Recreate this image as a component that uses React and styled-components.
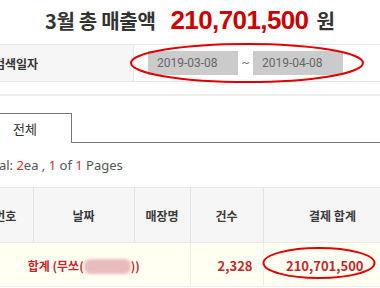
import React from "react";
import styled, { createGlobalStyle } from "styled-components";

const GlobalStyle = createGlobalStyle`
    body {
        margin: 0;
        background: #fff;
        overflow: hidden;
        font-family: "Noto Sans CJK KR", "Noto Sans", sans-serif;
    }
`;

const columns = [
    { label: "번호", width: 55 },
    { label: "날짜", width: 101 },
    { label: "매장명", width: 56 },
    { label: "건수", width: 73 },
    { label: "결제 합계", width: 139 },
];

function App() {
    return (
        <>
            <GlobalStyle />
            <Page>
                <Title>
                    <TitleText>3월 총 매출액</TitleText>
                    <TitleAmount>210,701,500</TitleAmount>
                    <TitleText>원</TitleText>
                </Title>

                <SearchRow>
                    <SearchLabel>검색일자</SearchLabel>
                    <SearchValue>
                        <DateBox>2019-03-08</DateBox>
                        <Tilde>~</Tilde>
                        <DateBox>2019-04-08</DateBox>
                    </SearchValue>
                </SearchRow>
                <Divider />

                <TabBar>
                    <Tab>전체</Tab>
                </TabBar>

                <Summary>
                    Total: <Red>2</Red>ea , <Red>1</Red> of <Red>1</Red> Pages
                </Summary>

                <Table>
                    <colgroup>
                        {columns.map((c) => (
                            <col key={c.label} style={{ width: c.width }} />
                        ))}
                    </colgroup>
                    <thead>
                        <tr>
                            {columns.map((c) => (
                                <Th key={c.label}>{c.label}</Th>
                            ))}
                        </tr>
                    </thead>
                    <tbody>
                        <SumRow>
                            <Td colSpan={3} align="center" size={12} pad={0}>
                                합계 (무쏘(<Blurred />))
                            </Td>
                            <Td align="right">2,328</Td>
                            <Td align="right" pad={38}>
                                210,701,500
                            </Td>
                        </SumRow>
                    </tbody>
                </Table>

                <Ring viewBox="0 0 240 42" left={149} top={42} width={240} height={42}>
                    <ellipse cx="120" cy="21" rx="116" ry="19" />
                </Ring>
                <Ring viewBox="0 0 116 34" left={283} top={246} width={116} height={34}>
                    <ellipse cx="58" cy="17" rx="55.5" ry="15" />
                </Ring>
            </Page>
        </>
    );
}

const Page = styled.div`
    position: relative;
    margin-left: -22px;
    width: 424px;
`;

const Title = styled.div`
    height: 44px;
    display: flex;
    align-items: baseline;
    padding: 5px 0 0 67px;
    box-sizing: border-box;
`;

const TitleText = styled.span`
    font-size: 20px;
    font-weight: 700;
    color: #333;
    letter-spacing: -0.3px;
`;

const TitleAmount = styled.span`
    font-family: "Liberation Sans", Arial, sans-serif;
    font-size: 26px;
    font-weight: 700;
    color: #cc0000;
    letter-spacing: -0.6px;
    margin: 0 8px 0 15px;
`;

const SearchRow = styled.div`
    display: flex;
    height: 36px;
    border-top: 1px solid #e6e6e6;
    border-bottom: 1px solid #e6e6e6;
`;

const SearchLabel = styled.div`
    width: 156px;
    box-sizing: border-box;
    padding-left: 16px;
    background: #f6f6f6;
    border-right: 1px solid #e6e6e6;
    display: flex;
    align-items: center;
    font-size: 12px;
    font-weight: 700;
    color: #333;
`;

const SearchValue = styled.div`
    flex: 1;
    display: flex;
    align-items: center;
    padding-left: 14px;
`;

const DateBox = styled.div`
    width: 90px;
    height: 24px;
    box-sizing: border-box;
    padding-left: 9px;
    background: #cbcbcb;
    display: flex;
    align-items: center;
    font-family: Roboto, "Noto Sans", sans-serif;
    font-size: 12px;
    color: #666;
`;

const Tilde = styled.span`
    width: 15px;
    text-align: center;
    font-family: Roboto, sans-serif;
    font-size: 12px;
    color: #777;
`;

const Divider = styled.div`
    margin-top: 12px;
    border-top: 2px solid #eeeeee;
`;

const TabBar = styled.div`
    margin-top: 17px;
    display: flex;
    border-bottom: 1px solid #777;
`;

const Tab = styled.div`
    width: 94px;
    height: 30px;
    box-sizing: border-box;
    border: 1px solid #777;
    border-bottom: none;
    margin-bottom: -1px;
    padding-bottom: 1px;
    background: #fff;
    display: flex;
    align-items: center;
    justify-content: center;
    font-size: 13px;
    color: #333;
`;

const Summary = styled.div`
    height: 44px;
    display: flex;
    align-items: center;
    white-space: pre;
    padding-left: 2px;
    font-family: "Noto Sans", sans-serif;
    font-size: 13px;
    color: #555;
`;

const Red = styled.span`
    color: #d42a2a;
`;

const Table = styled.table`
    border-collapse: collapse;
    table-layout: fixed;
    width: 424px;
`;

const Th = styled.th`
    height: 54px;
    padding: 0;
    background: #f6f6f6;
    border-top: 1px solid #e8e8e8;
    border-bottom: 1px solid #e8e8e8;
    border-right: 1px solid #e3e3e3;
    font-size: 12px;
    font-weight: 700;
    color: #3a3a3a;
    text-align: center;
`;

const SumRow = styled.tr`
    background: #fffff2;
`;

const Td = styled.td`
    height: 41px;
    padding: 2px ${({ pad }) => pad ?? 10}px 0 0;
    border-right: 1px solid #eeeede;
    border-bottom: 1px solid #ececec;
    text-align: ${({ align }) => align};
    font-size: ${({ size }) => size ?? 13}px;
    font-weight: 700;
    color: #c0282d;
    white-space: nowrap;
`;

const Blurred = styled.span`
    display: inline-block;
    width: 47px;
    height: 15px;
    vertical-align: -3px;
    border-radius: 6px;
    background: #e8bcbc;
    filter: blur(1.5px);
`;

const Ring = styled.svg`
    position: absolute;
    left: ${({ left }) => left}px;
    top: ${({ top }) => top}px;
    overflow: visible;
    ellipse {
        fill: none;
        stroke: #e00000;
        stroke-width: 2;
    }
`;

export default App;
